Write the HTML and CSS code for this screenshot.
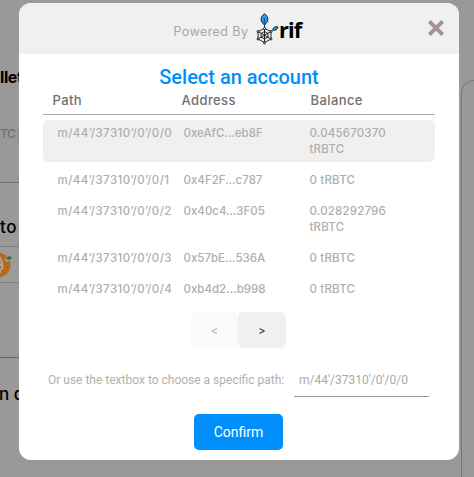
FILE: index.html
```html
<!DOCTYPE html>
<html lang="en">
<head>
<meta charset="utf-8">
<title>Select an account</title>
<link rel="stylesheet" href="styles.css">
</head>
<body>
<div class="page">
  <div class="page-left">
    <section class="wallet"><h3>llet</h3><p>TC a</p></section>
    <section class="token">
      <h4>to</h4>
      <div class="token-field">
        <svg width="14" height="26" viewBox="0 0 14 26"><circle cx="-2" cy="13" r="12.500" fill="#b56b14"/><path d="M-3 8Q3 7 1.500 12Q5 18-3 18M-3 13H2M0 5V8M0 18V21" fill="none" stroke="#aaa" stroke-width="2"/><path d="M4 8L9 2L13 7L7 10Z" fill="#9c9c9c"/><path d="M6 7Q7 3 12 5Q11 9 6 7Z" fill="#386e3b"/></svg>
      </div>
    </section>
    <section class="amount"><h4>n d</h4></section>
  </div>
  <div class="page-right"></div>
</div>
<main class="modal">
  <header class="modal-header">
    <span class="powered">Powered By</span>
    <svg class="logo" width="24" height="32" viewBox="0 0 24 32">
      <g fill="none" stroke="#111" stroke-width=".9">
        <path d="M8.500 12V30M2 18.500L15 26M15 18.500L2 26M8.500 15.500L15 18.500V26L8.500 29.500L2 26V18.500ZM5 20.500L8.500 18.500L12 20.500V24L8.500 26L5 24ZM14 19L18 16"/>
      </g>
      <g fill="#f0f0f0" stroke="#111" stroke-width=".9"><circle cx="8.500" cy="15.500" r="1"/><circle cx="2" cy="18.500" r="1"/><circle cx="15" cy="18.500" r="1"/><circle cx="2" cy="26" r="1"/><circle cx="15" cy="26" r="1"/><circle cx="8.500" cy="30" r="1"/></g>
      <path d="M8.500 .7Q15.500 6 8.500 12Q1.500 6 8.500 .7Z" fill="#20a5ef" stroke="#123" stroke-width="1"/>
      <path d="M8.500 5V12" stroke="#075bb0" stroke-width="1.500"/>
      <path d="M17 17Q17 13 22 14Q21 18 17 17Z" fill="#20a5ef" stroke="#123" stroke-width="1"/>
    </svg>
    <span class="rif">rif</span>
    <svg class="close" width="18" height="18" viewBox="0 0 18 18"><path d="M2.300 2.300L15.700 15.700M15.700 2.300L2.300 15.700" stroke="#a39492" stroke-width="4"/></svg>
  </header>
  <h1>Select an account</h1>
  <div class="accounts">
    <div class="heads"><span>Path</span><span>Address</span><span>Balance</span></div>
    <div class="row selected"><span class="path">m/44’/37310’/0’/0/0</span><span>0xeAfC...eb8F</span><span class="bal">0.045670370<br>tRBTC</span></div>
    <div class="row"><span class="path">m/44’/37310’/0’/0/1</span><span>0x4F2F...c787</span><span class="bal">0 tRBTC</span></div>
    <div class="row"><span class="path">m/44’/37310’/0’/0/2</span><span>0x40c4...3F05</span><span class="bal">0.028292796<br>tRBTC</span></div>
    <div class="row"><span class="path">m/44’/37310’/0’/0/3</span><span>0x57bE...536A</span><span class="bal">0 tRBTC</span></div>
    <div class="row"><span class="path">m/44’/37310’/0’/0/4</span><span>0xb4d2...b998</span><span class="bal">0 tRBTC</span></div>
  </div>
  <div class="pager"><button class="prev">&lt;</button><button>&gt;</button></div>
  <div class="custom"><span>Or use the textbox to choose a specific path:</span><div class="field">m/44'/37310'/0'/0/0</div></div>
  <button class="confirm">Confirm</button>
</main>
</body>
</html>
```
FILE: styles.css
```css
* { box-sizing: border-box; }
body { margin: 0; width: 474px; height: 477px; overflow: hidden; background: #999; font-family: Roboto, "Liberation Sans", sans-serif; }
h1, h3, h4, p { margin: 0; font-weight: 500; }
button { border: 0; padding: 0; font-family: inherit; }
svg { display: block; flex: none; }
.page { display: flex; justify-content: space-between; height: 477px; }
.page-left { width: 40px; color: #000; font-family: Inter, sans-serif; white-space: nowrap; }
.wallet { height: 183px; padding-top: 67px; border-bottom: 1px solid #707070; }
.wallet h3 { font-size: 16px; line-height: 20px; font-weight: 700; letter-spacing: -.4px; }
.wallet p { margin-top: 39px; font-size: 12px; line-height: 16px; color: #707070; letter-spacing: -.5px; }
.token { height: 175px; padding-top: 34px; border-bottom: 1px solid #666; }
.token h4 { font-size: 17px; line-height: 20px; letter-spacing: .6px; }
.token-field { height: 37px; margin-top: 9px; padding-top: 5px; border: solid #808080; border-width: 1px 0; background: #9c9c9c; }
.amount { padding-top: 26px; }
.amount h4 { font-size: 17px; line-height: 20px; margin-left: -1px; }
.page-right { width: 13px; margin-top: 80px; border: 1px solid #777; border-width: 1px 0 0 1px; border-radius: 22px 0 0 0; }
.modal { position: absolute; left: 19px; top: 3px; width: 440px; height: 457px; border-radius: 12px; overflow: hidden; background: #fff; color: #aaa; }
.modal-header { height: 51px; display: flex; align-items: flex-start; background: #f0f0f0; }
.powered { width: 82px; margin: 20px 0 0 154.5px; font: 400 12.5px/18px Inter, sans-serif; letter-spacing: .42px; color: #a8a8a8; white-space: nowrap; }
.logo { margin: 10px 0 0 .5px; }
.rif { width: 24px; font: 700 22px/26px "Noto Sans", sans-serif; letter-spacing: -.8px; color: #000; margin: 13px 0 0 -1px; }
.close { margin: 16px 0 0 124px; }
h1 { margin-top: 11px; text-align: center; font-size: 20px; line-height: 24px; color: #008ffa; }
.accounts { width: 392px; margin: 0 auto; font-family: Inter, sans-serif; font-weight: 500; }
.heads { display: grid; grid-template-columns: 129px 129px 1fr; height: 26px; padding: 2px 0 0 9.500px; border-bottom: 1px solid #aaa; font-size: 13px; line-height: 18px; letter-spacing: .4px; color: #707070; }
.row { display: grid; grid-template-columns: 126px 126px 1fr; margin-top: 5px; padding: 5px 0 5px 14.500px; font-size: 11.5px; line-height: 16px; white-space: nowrap; color: #aeaeae; }
.row.selected { background: #f0f0f0; border-radius: 5px; }
.path { letter-spacing: .43px; }
.bal { letter-spacing: .18px; }
.pager { display: flex; margin: 10px 0 0 172px; }
.pager button { width: 48px; height: 36px; border-radius: 5px; background: #f0f0f0; color: #444; font: 500 11px/36px Inter, sans-serif; }
.pager .prev { width: 47px; background: #fafafa; color: #b9b9b9; }
.custom { display: flex; margin: 15px 0 0 29px; font-size: 12px; line-height: 34px; white-space: nowrap; }
.custom span { width: 246px; color: #b0b0b0; }
.field { width: 135px; height: 34px; padding-left: 5px; border-bottom: 1px solid #999; }
.confirm { display: block; width: 89px; height: 36px; margin: 17px 0 0 175px; border-radius: 5px; background: #008ffa; color: #fff; font-size: 14px; }
```
